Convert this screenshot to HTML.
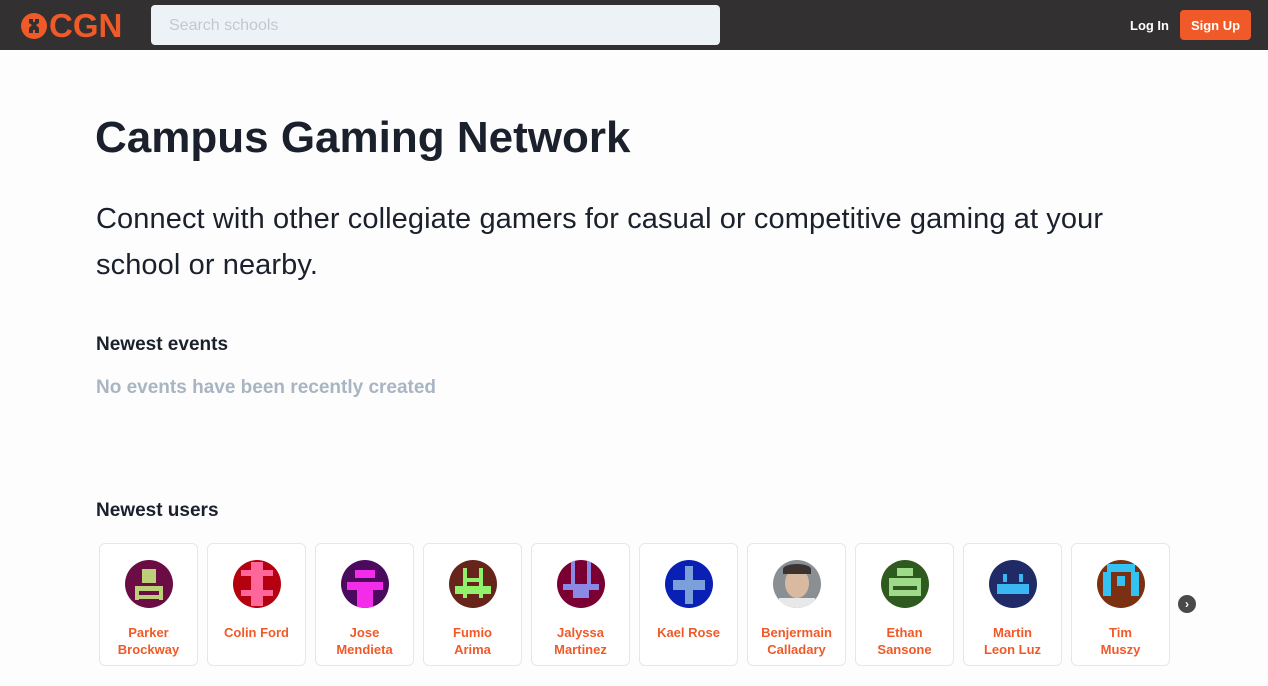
<!DOCTYPE html>
<html><head><meta charset="utf-8"><style>
*{box-sizing:border-box;margin:0;padding:0}
body{width:1268px;height:686px;overflow:hidden;background:#fdfdfd;font-family:"Liberation Sans",sans-serif;color:#1a202c;position:relative}
.nav{position:absolute;left:0;top:0;width:1268px;height:50px;background:#323031}
.logo{position:absolute;left:20px;top:9px;color:#f05a28;font-weight:bold;font-size:33px;line-height:33px}
.search{position:absolute;left:151px;top:5px;width:569px;height:40px;background:#edf2f7;border-radius:4px;color:#c0c8d2;font-size:16px;line-height:42px;padding-left:18px}
.login{position:absolute;left:1130px;top:18px;color:#fff;font-weight:bold;font-size:13px}
.signup{position:absolute;left:1180px;top:10px;width:71px;height:30px;background:#f05a28;border-radius:4px;color:#fff;font-weight:bold;font-size:13px;line-height:31px;text-align:center}
h1{position:absolute;left:95px;top:113px;font-size:44px;font-weight:bold;letter-spacing:0}
.sub{position:absolute;left:96px;top:196px;width:1060px;font-size:29px;line-height:46px;letter-spacing:0.1px}
h3{position:absolute;left:96px;font-size:19px;font-weight:bold}
.none{position:absolute;left:96px;top:377px;font-size:19px;font-weight:bold;color:#a9b5c3}
.card{position:absolute;top:543px;width:99px;height:123px;border:1px solid #e2e8f0;border-radius:6px;background:#fff;text-align:center}
.av{position:absolute;left:25px;top:16px;width:48px;height:48px;border-radius:50%;overflow:hidden}
.nm{position:absolute;left:0;right:0;top:80px;font-size:13px;font-weight:bold;color:#f05a28;line-height:17px}
.arr{position:absolute;left:1178px;top:595px;width:18px;height:18px;border-radius:50%;background:#4a4a4a;color:#fff;font-size:12px;line-height:18px;text-align:center;font-weight:bold}
</style></head><body>
<div class="nav">
<div class="logo"><svg width="28" height="28" viewBox="0 0 28 28" style="vertical-align:-3px;margin-right:1px"><circle cx="14" cy="14" r="13" fill="#f05a28"/><path d="M9 7h4v3h2V7h4v4l-3 2 3 3v5h-4v-3h-2v3H9v-5l3-3-3-2z" fill="#323031"/></svg>CGN</div>
<div class="search">Search schools</div>
<div class="login">Log In</div>
<div class="signup">Sign Up</div>
</div>
<h1>Campus Gaming Network</h1>
<div class="sub">Connect with other collegiate gamers for casual or competitive gaming at your school or nearby.</div>
<h3 style="top:334px">Newest events</h3>
<div class="none">No events have been recently created</div>
<h3 style="top:500px">Newest users</h3>

<div class="card" style="left:99px"><div class="av" style="background:#6b0c45"><div style="position:absolute;left:17px;top:9px;width:14px;height:14px;background:#bcd07a"></div><div style="position:absolute;left:10px;top:26px;width:28px;height:5px;background:#bcd07a"></div><div style="position:absolute;left:10px;top:30px;width:4px;height:10px;background:#bcd07a"></div><div style="position:absolute;left:34px;top:30px;width:4px;height:10px;background:#bcd07a"></div><div style="position:absolute;left:14px;top:35px;width:20px;height:4px;background:#bcd07a"></div></div><div class="nm">Parker<br>Brockway</div></div>
<div class="card" style="left:207px"><div class="av" style="background:#b5000f"><div style="position:absolute;left:18px;top:2px;width:12px;height:44px;background:#ff6699"></div><div style="position:absolute;left:8px;top:10px;width:32px;height:6px;background:#ff6699"></div><div style="position:absolute;left:8px;top:30px;width:32px;height:6px;background:#ff6699"></div></div><div class="nm">Colin Ford</div></div>
<div class="card" style="left:315px"><div class="av" style="background:#4b0a5e"><div style="position:absolute;left:14px;top:10px;width:20px;height:8px;background:#f22ce9"></div><div style="position:absolute;left:6px;top:22px;width:36px;height:8px;background:#f22ce9"></div><div style="position:absolute;left:16px;top:30px;width:16px;height:18px;background:#f22ce9"></div></div><div class="nm">Jose<br>Mendieta</div></div>
<div class="card" style="left:423px"><div class="av" style="background:#66241a"><div style="position:absolute;left:14px;top:8px;width:4px;height:30px;background:#8ff26a"></div><div style="position:absolute;left:30px;top:8px;width:4px;height:30px;background:#8ff26a"></div><div style="position:absolute;left:6px;top:26px;width:36px;height:8px;background:#8ff26a"></div><div style="position:absolute;left:14px;top:18px;width:20px;height:4px;background:#8ff26a"></div></div><div class="nm">Fumio<br>Arima</div></div>
<div class="card" style="left:531px"><div class="av" style="background:#7a0033"><div style="position:absolute;left:14px;top:0;width:4px;height:26px;background:#8a8ae6"></div><div style="position:absolute;left:30px;top:0;width:4px;height:26px;background:#8a8ae6"></div><div style="position:absolute;left:6px;top:24px;width:36px;height:6px;background:#8a8ae6"></div><div style="position:absolute;left:16px;top:30px;width:16px;height:8px;background:#8a8ae6"></div></div><div class="nm">Jalyssa<br>Martinez</div></div>
<div class="card" style="left:639px"><div class="av" style="background:#0a1fb3"><div style="position:absolute;left:20px;top:6px;width:8px;height:38px;background:#7a9fd9"></div><div style="position:absolute;left:8px;top:20px;width:32px;height:10px;background:#7a9fd9"></div></div><div class="nm">Kael Rose</div></div>
<div class="card" style="left:747px"><div class="av" style="background:#8a8f94"><div style="position:absolute;left:12px;top:8px;width:24px;height:30px;border-radius:50%;background:#d9b9a0"></div><div style="position:absolute;left:10px;top:4px;width:28px;height:10px;border-radius:50% 50% 0 0;background:#3a3330"></div><div style="position:absolute;left:6px;top:38px;width:36px;height:12px;background:#e8e8e8"></div></div><div class="nm">Benjermain<br>Calladary</div></div>
<div class="card" style="left:855px"><div class="av" style="background:#2f5a1f"><div style="position:absolute;left:16px;top:8px;width:16px;height:8px;background:#9ddb8a"></div><div style="position:absolute;left:8px;top:18px;width:32px;height:18px;background:#9ddb8a"></div><div style="position:absolute;left:12px;top:26px;width:24px;height:4px;background:#2f5a1f"></div></div><div class="nm">Ethan<br>Sansone</div></div>
<div class="card" style="left:963px"><div class="av" style="background:#1f2a66"><div style="position:absolute;left:14px;top:14px;width:4px;height:8px;background:#3ab6f2"></div><div style="position:absolute;left:30px;top:14px;width:4px;height:8px;background:#3ab6f2"></div><div style="position:absolute;left:8px;top:24px;width:32px;height:10px;background:#3ab6f2"></div></div><div class="nm">Martin<br>Leon Luz</div></div>
<div class="card" style="left:1071px"><div class="av" style="background:#7a3011"><div style="position:absolute;left:10px;top:4px;width:28px;height:8px;background:#33c2f2"></div><div style="position:absolute;left:6px;top:12px;width:8px;height:24px;background:#33c2f2"></div><div style="position:absolute;left:34px;top:12px;width:8px;height:24px;background:#33c2f2"></div><div style="position:absolute;left:20px;top:16px;width:8px;height:10px;background:#33c2f2"></div></div><div class="nm">Tim<br>Muszy</div></div>
<div class="arr">›</div>
</body></html>
